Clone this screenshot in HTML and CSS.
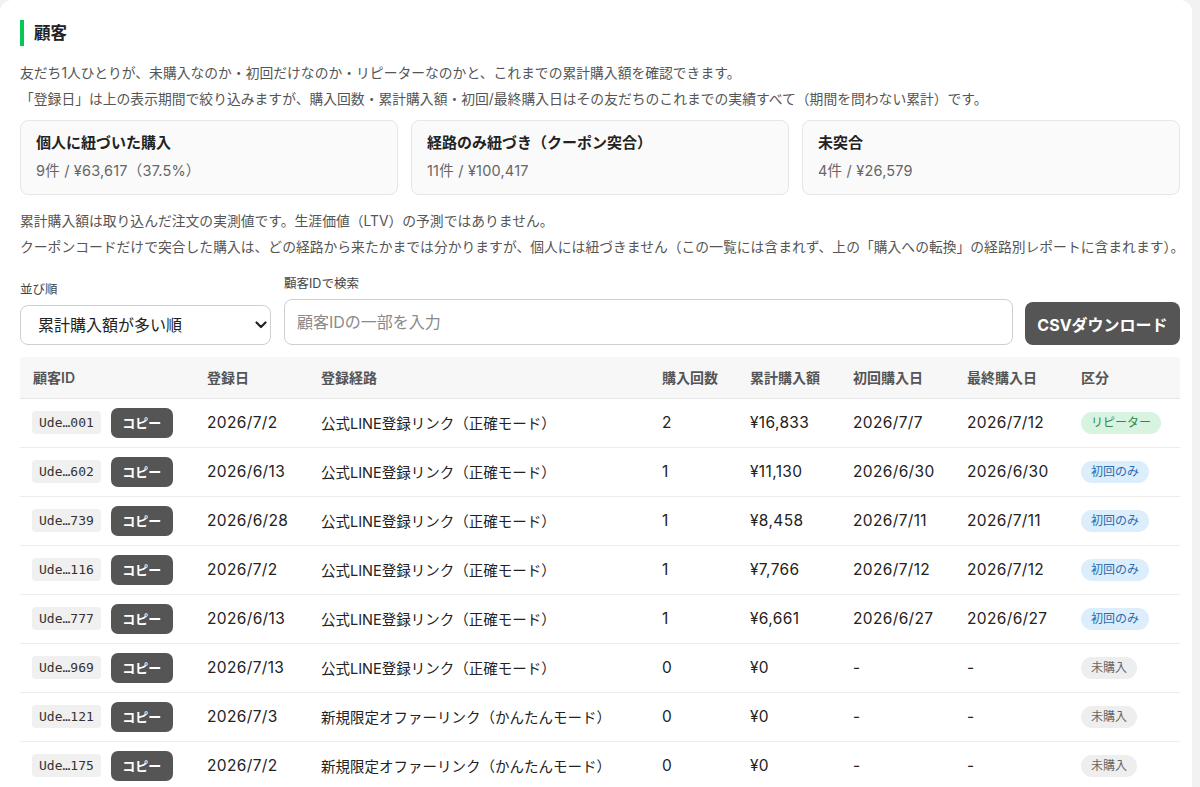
FILE: index.html
```html
<!DOCTYPE html>
<html lang="ja">
<head>
<meta charset="utf-8">
<title>顧客</title>
<link rel="stylesheet" href="styles.css">
</head>
<body>
<div class="panel">
  <h2 class="title">顧客</h2>
  <p class="desc">友だち1人ひとりが、未購入なのか・初回だけなのか・リピーターなのかと、これまでの累計購入額を確認できます。</p>
  <p class="desc">「登録日」は上の表示期間で絞り込みますが、購入回数・累計購入額・初回/最終購入日はその友だちのこれまでの実績すべて（期間を問わない累計）です。</p>

  <div class="cards">
    <div class="card">
      <div class="card-title">個人に紐づいた購入</div>
      <div class="card-value">9件 / ¥63,617（37.5%）</div>
    </div>
    <div class="card">
      <div class="card-title">経路のみ紐づき（クーポン突合）</div>
      <div class="card-value">11件 / ¥100,417</div>
    </div>
    <div class="card">
      <div class="card-title">未突合</div>
      <div class="card-value">4件 / ¥26,579</div>
    </div>
  </div>

  <p class="desc note-first">累計購入額は取り込んだ注文の実測値です。生涯価値（LTV）の予測ではありません。</p>
  <p class="desc">クーポンコードだけで突合した購入は、どの経路から来たかまでは分かりますが、個人には紐づきません（この一覧には含まれず、上の「購入への転換」の経路別レポートに含まれます）。</p>

  <div class="controls">
    <div class="field field-sort">
      <span class="field-label">並び順</span>
      <div class="select-wrap">
        <select class="select"><option>累計購入額が多い順</option></select>
        <svg class="chev" width="12" height="8" viewBox="0 0 12 8"><path d="M1.5 1.5 L6 6 L10.5 1.5" fill="none" stroke="#222" stroke-width="2.2" stroke-linecap="round" stroke-linejoin="round"/></svg>
      </div>
    </div>
    <div class="field field-search">
      <span class="field-label">顧客IDで検索</span>
      <input class="input" type="text" placeholder="顧客IDの一部を入力">
    </div>
    <button class="btn-csv" type="button">CSVダウンロード</button>
  </div>

  <table class="tbl">
    <colgroup>
      <col class="c1"><col class="c2"><col class="c3"><col class="c4"><col class="c5"><col class="c6"><col class="c7"><col class="c8">
    </colgroup>
    <thead>
      <tr><th>顧客ID</th><th>登録日</th><th>登録経路</th><th>購入回数</th><th>累計購入額</th><th>初回購入日</th><th>最終購入日</th><th>区分</th></tr>
    </thead>
    <tbody>
      <tr><td><div class="idcell"><span class="chip">Ude…001</span><button class="copy" type="button">コピー</button></div></td><td class="num">2026/7/2</td><td>公式LINE登録リンク（正確モード）</td><td class="num">2</td><td class="num">¥16,833</td><td class="num">2026/7/7</td><td class="num">2026/7/12</td><td><span class="badge badge-green">リピーター</span></td></tr>
      <tr><td><div class="idcell"><span class="chip">Ude…602</span><button class="copy" type="button">コピー</button></div></td><td class="num">2026/6/13</td><td>公式LINE登録リンク（正確モード）</td><td class="num">1</td><td class="num">¥11,130</td><td class="num">2026/6/30</td><td class="num">2026/6/30</td><td><span class="badge badge-blue">初回のみ</span></td></tr>
      <tr><td><div class="idcell"><span class="chip">Ude…739</span><button class="copy" type="button">コピー</button></div></td><td class="num">2026/6/28</td><td>公式LINE登録リンク（正確モード）</td><td class="num">1</td><td class="num">¥8,458</td><td class="num">2026/7/11</td><td class="num">2026/7/11</td><td><span class="badge badge-blue">初回のみ</span></td></tr>
      <tr><td><div class="idcell"><span class="chip">Ude…116</span><button class="copy" type="button">コピー</button></div></td><td class="num">2026/7/2</td><td>公式LINE登録リンク（正確モード）</td><td class="num">1</td><td class="num">¥7,766</td><td class="num">2026/7/12</td><td class="num">2026/7/12</td><td><span class="badge badge-blue">初回のみ</span></td></tr>
      <tr><td><div class="idcell"><span class="chip">Ude…777</span><button class="copy" type="button">コピー</button></div></td><td class="num">2026/6/13</td><td>公式LINE登録リンク（正確モード）</td><td class="num">1</td><td class="num">¥6,661</td><td class="num">2026/6/27</td><td class="num">2026/6/27</td><td><span class="badge badge-blue">初回のみ</span></td></tr>
      <tr><td><div class="idcell"><span class="chip">Ude…969</span><button class="copy" type="button">コピー</button></div></td><td class="num">2026/7/13</td><td>公式LINE登録リンク（正確モード）</td><td class="num">0</td><td class="num">¥0</td><td class="num">-</td><td class="num">-</td><td><span class="badge badge-gray">未購入</span></td></tr>
      <tr><td><div class="idcell"><span class="chip">Ude…121</span><button class="copy" type="button">コピー</button></div></td><td class="num">2026/7/3</td><td>新規限定オファーリンク（かんたんモード）</td><td class="num">0</td><td class="num">¥0</td><td class="num">-</td><td class="num">-</td><td><span class="badge badge-gray">未購入</span></td></tr>
      <tr><td><div class="idcell"><span class="chip">Ude…175</span><button class="copy" type="button">コピー</button></div></td><td class="num">2026/7/2</td><td>新規限定オファーリンク（かんたんモード）</td><td class="num">0</td><td class="num">¥0</td><td class="num">-</td><td class="num">-</td><td><span class="badge badge-gray">未購入</span></td></tr>
    </tbody>
  </table>
</div>
</body>
</html>
```

FILE: styles.css
```css
* { box-sizing: border-box; }
html, body { margin: 0; padding: 0; }
body {
  background: #f2f2f3;
  font-family: "Inter", "Noto Sans CJK JP", sans-serif;
  color: #222;
}
.panel {
  width: 1192px;
  background: #fff;
  border-radius: 12px;
  padding: 20px 12px 20px 20px;
}
.title {
  margin: 0;
  height: 26px;
  line-height: 26px;
  font-size: 16.5px;
  font-weight: 700;
  border-left: 4px solid #06c755;
  padding-left: 10px;
  color: #222;
}
.desc {
  margin: 0;
  font-size: 13.8px;
  line-height: 26px;
  color: #555;
  white-space: nowrap;
}
.title + .desc { margin-top: 14px; }
.cards {
  display: grid;
  grid-template-columns: repeat(3, 1fr);
  gap: 13px;
  margin-top: 8px;
  width: 1160px;
}
.card {
  background: #fafafa;
  border: 1px solid #e6e6e6;
  border-radius: 8px;
  padding: 11px 15px 12px;
  height: 75px;
}
.card-title {
  font-size: 15px;
  font-weight: 700;
  line-height: 22px;
  color: #222;
}
.card-value {
  margin-top: 6px;
  font-size: 14.5px;
  letter-spacing: 0.2px;
  line-height: 22px;
  color: #666;
}
.note-first { margin-top: 13px; }
.controls {
  display: flex;
  align-items: flex-end;
  gap: 12px;
  margin-top: 15px;
  width: 1160px;
}
.field { display: flex; flex-direction: column; }
.field-label {
  font-size: 12.5px;
  line-height: 18px;
  color: #444;
  margin-bottom: 6px;
}
.field-sort { width: 251px; }
.field-search { flex: 1; margin-left: 1px; }
.select-wrap { position: relative; }
.select {
  appearance: none;
  -webkit-appearance: none;
  width: 100%;
  height: 40px;
  border: 1px solid #cfcfcf;
  border-radius: 8px;
  background: #fff;
  font-family: inherit;
  font-size: 16px;
  color: #222;
  padding: 0 30px 0 17px;
}
.chev {
  position: absolute;
  right: 4px;
  top: 16px;
}
.input {
  height: 46px;
  border: 1px solid #cfcfcf;
  border-radius: 8px;
  background: #fff;
  font-family: inherit;
  font-size: 16px;
  padding: 0 12px;
  color: #222;
}
.input::placeholder { color: #8a8a8a; }
.btn-csv {
  flex: none;
  width: 155px;
  height: 43px;
  border: 0;
  border-radius: 8px;
  background: #555;
  color: #fff;
  font-family: inherit;
  font-size: 16px;
  font-weight: 700;
  padding: 0;
}
.tbl {
  margin-top: 12px;
  width: 1160px;
  border-collapse: collapse;
  table-layout: fixed;
}
.c1 { width: 174px; }
.c2 { width: 114px; }
.c3 { width: 341px; }
.c4 { width: 88px; }
.c5 { width: 103px; }
.c6 { width: 114px; }
.c7 { width: 114px; }
.c8 { width: 112px; }
.tbl th {
  background: #f7f7f8;
  height: 41px;
  text-align: left;
  font-size: 14px;
  font-weight: 600;
  color: #555;
  padding: 0 13px;
  border-bottom: 1px solid #e6e6e6;
}
.tbl td {
  height: 49px;
  padding: 0 13px;
  font-size: 14.5px;
  color: #222;
  border-bottom: 1px solid #ececec;
  white-space: nowrap;
  vertical-align: middle;
}
.tbl td.num {
  font-size: 15.5px;
  letter-spacing: 0.35px;
}
.idcell {
  display: flex;
  align-items: center;
  gap: 10px;
  margin-left: -1px;
}
.chip {
  font-family: "DejaVu Sans Mono", monospace;
  font-size: 13px;
  line-height: 23px;
  height: 23px;
  padding: 0 7px;
  background: #f0f0f0;
  border-radius: 4px;
  color: #333;
}
.copy {
  height: 30px;
  width: 62px;
  border: 0;
  border-radius: 7px;
  background: #555;
  color: #fff;
  font-family: inherit;
  font-size: 13px;
  font-weight: 700;
  padding: 0;
}
.badge {
  display: inline-block;
  height: 22px;
  line-height: 22px;
  padding: 0 10px;
  border-radius: 11px;
  font-size: 12px;
}
.badge-green { background: #d9f3e1; color: #2f8a4c; }
.badge-blue { background: #dcedfb; color: #2b6cb0; }
.badge-gray { background: #eeeeee; color: #666; }
```
